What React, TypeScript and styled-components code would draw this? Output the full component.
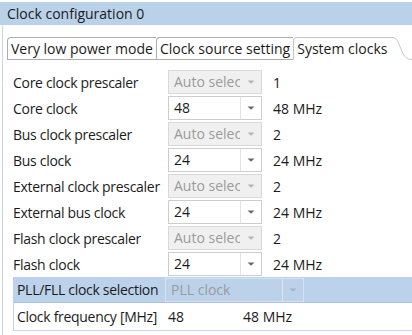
import React from "react";
import styled, { createGlobalStyle } from "styled-components";

const GlobalStyle = createGlobalStyle`
  html, body { margin: 0; padding: 0; background: #ffffff; }
  body { font-family: "Open Sans", "Noto Sans", sans-serif; color: #1b1b1b; }
`;

const Window = styled.div`
  width: 412px;
  height: 335px;
  overflow: hidden;
  background: #ffffff;
  padding-top: 2px;
  box-sizing: border-box;
`;

const TitleBar = styled.div`
  height: 23px;
  line-height: 23px;
  background: #bad1ea;
  padding-left: 7px;
  font-size: 14px;
  color: #1b1b1b;
`;

const Frame = styled.div`
  margin-left: 2px;
  border-left: 1px solid #c9d6e6;
  padding-left: 4px;
  padding-top: 12px;
  height: 310px;
  box-sizing: border-box;
`;

const TabStrip = styled.div`
  display: flex;
  align-items: flex-end;
  height: 23px;
`;

const Tab = styled.div<{ $selected?: boolean }>`
  height: 23px;
  box-sizing: border-box;
  padding: 0 3px 0 3px;
  font-size: 14px;
  line-height: 21px;
  white-space: nowrap;
  background: #ffffff;
  border: 1px solid ${(p) => (p.$selected ? "#c4c4c4" : "#adadad")};
  border-right: none;
  border-bottom: ${(p) => (p.$selected ? "1px solid #ffffff" : "1px solid #adadad")};
  border-top-left-radius: 4px;
`;

const TabCurve = styled.svg`
  display: block;
  flex: 0 0 auto;
`;

const TabFiller = styled.div`
  flex: 1;
  height: 23px;
  box-sizing: border-box;
  border-bottom: 1px solid #c4c4c4;
`;

const Content = styled.div`
  padding: 9px 0 0 6px;
`;

const Row = styled.div`
  display: grid;
  grid-template-columns: 155px 94px auto;
  align-items: center;
  height: 26px;
  font-size: 14px;
`;

const Label = styled.div`
  white-space: nowrap;
  letter-spacing: -0.3px;
`;

const Value = styled.div`
  padding-left: 11px;
  white-space: nowrap;
`;

const Combo = styled.div<{ $disabled?: boolean; $tinted?: boolean }>`
  display: flex;
  height: 24px;
  box-sizing: border-box;
  border: 1px solid ${(p) => (p.$tinted ? "#d6e2f0" : p.$disabled ? "#d9d9d9" : "#cdcdcd")};
  background: ${(p) => (p.$tinted ? "#bcd2ea" : p.$disabled ? "#f0f0f0" : "#ffffff")};
  color: ${(p) => (p.$disabled ? "#9b9b9b" : "#1b1b1b")};
  overflow: hidden;
`;

const ComboText = styled.div`
  flex: 1;
  min-width: 0;
  overflow: hidden;
  white-space: nowrap;
  padding-left: 5px;
  line-height: 22px;
`;

const ComboButton = styled.div<{ $divider?: boolean }>`
  flex: 0 0 20px;
  display: flex;
  align-items: center;
  justify-content: center;
  border-left: 1px solid ${(p) => (p.$divider ? "#e3e3e3" : "transparent")};
`;

const Arrow = ({ color }: { color: string }) => (
  <svg width="8" height="4" viewBox="0 0 8 4">
    <path d="M0.5 0.5 L7.5 0.5 L4 3.8 Z" fill={color} />
  </svg>
);

const Group = styled.div`
  margin-left: 6px;
`;

const GroupRow = styled.div<{ $band?: boolean }>`
  display: grid;
  grid-template-columns: 148px 75px auto;
  align-items: center;
  font-size: 14px;
  height: ${(p) => (p.$band ? "26px" : "28px")};
  box-sizing: border-box;
  background: ${(p) => (p.$band ? "#bcd2ea" : "#ffffff")};
  border-bottom: 1px solid ${(p) => (p.$band ? "#a9c3e0" : "#c4d7ec")};
  border-left: 1px solid ${(p) => (p.$band ? "#bcd2ea" : "#c4d7ec")};
  padding-left: 3px;
`;

const PllCombo = styled(Combo)`
  width: 139px;
  height: 24px;
`;

const PllCell = styled.div`
  grid-column: 2 / span 2;
`;

const FreqValue = styled.div`
  padding-left: 3px;
`;

type Item = { label: string; value: string; sel: string; disabled: boolean };

const items: Item[] = [
  { label: "Core clock prescaler", sel: "Auto select", value: "1", disabled: true },
  { label: "Core clock", sel: "48", value: "48 MHz", disabled: false },
  { label: "Bus clock prescaler", sel: "Auto select", value: "2", disabled: true },
  { label: "Bus clock", sel: "24", value: "24 MHz", disabled: false },
  { label: "External clock prescaler", sel: "Auto select", value: "2", disabled: true },
  { label: "External bus clock", sel: "24", value: "24 MHz", disabled: false },
  { label: "Flash clock prescaler", sel: "Auto select", value: "2", disabled: true },
  { label: "Flash clock", sel: "24", value: "24 MHz", disabled: false },
];

export default function App() {
  return (
    <>
      <GlobalStyle />
      <Window>
        <TitleBar>Clock configuration 0</TitleBar>
        <Frame>
          <TabStrip>
            <Tab>Very low power mode</Tab>
            <Tab>Clock source setting</Tab>
            <Tab $selected>System clocks</Tab>
            <TabCurve width="22" height="23" viewBox="0 0 22 23">
              <path d="M0 0.5 L2 0.5 C7 0.5 8 5 11 12 C13 17 15 22.5 22 22.5" fill="none" stroke="#c4c4c4" strokeWidth="1" />
            </TabCurve>
            <TabFiller />
          </TabStrip>
          <Content>
            {items.map((it) => (
              <Row key={it.label}>
                <Label>{it.label}</Label>
                <Combo $disabled={it.disabled}>
                  <ComboText>{it.sel}</ComboText>
                  <ComboButton $divider={!it.disabled}>
                    <Arrow color={it.disabled ? "#b5b5b5" : "#6a6a6a"} />
                  </ComboButton>
                </Combo>
                <Value>{it.value}</Value>
              </Row>
            ))}
          </Content>
          <Group>
            <GroupRow $band>
              <Label>PLL/FLL clock selection</Label>
              <PllCell>
                <PllCombo $disabled $tinted>
                  <ComboText>PLL clock</ComboText>
                  <ComboButton $divider>
                    <Arrow color="#9fb4cc" />
                  </ComboButton>
                </PllCombo>
              </PllCell>
            </GroupRow>
            <GroupRow>
              <Label>Clock frequency [MHz]</Label>
              <FreqValue>48</FreqValue>
              <FreqValue>48 MHz</FreqValue>
            </GroupRow>
          </Group>
        </Frame>
      </Window>
    </>
  );
}
